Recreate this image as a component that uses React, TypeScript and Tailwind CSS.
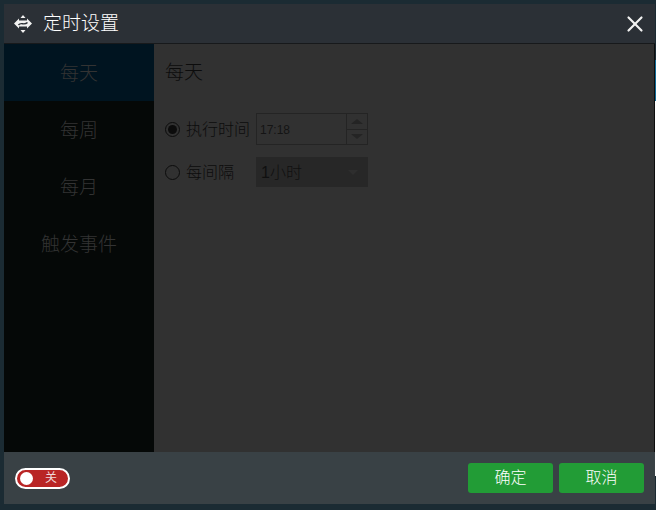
import { X } from "lucide-react";

const FONT = "font-['Liberation_Sans','Noto_Sans_CJK_SC',sans-serif]";

const TABS = ["每天", "每周", "每月", "触发事件"];

const TimerIcon = () => (
    <svg width="20" height="20" viewBox="0 0 20 20" fill="#f2f2f2">
        <path d="M10 1 L12.5 4 H7.5 Z" />
        <path d="M10 19 L7.5 16 H12.5 Z" />
        <path d="M1 9.5 L6 4.5 V6.5 H14 V4.5 L19 9.5 L14 14.5 V12.5 H6 V14.5 Z" />
        <path d="M5.5 11 C8 7.5 11 12 14.5 8.5" fill="none" stroke="#2b3036" strokeWidth="1.4" />
    </svg>
);

export default function App() {
    return (
        <div className={`${FONT} flex w-[656px] h-[510px] bg-[#1b2b33] overflow-hidden`}>
            <div className="flex flex-col flex-1 min-w-0 h-full pt-1 pb-[6px] pl-1">
                {/* Title bar */}
                <div className="flex items-center h-10 shrink-0 bg-[#2b3036] border-b border-[#17191b] pl-[9px] pr-[7px]">
                    <TimerIcon />
                    <span className="ml-[10px] text-[19px] leading-5 font-light text-white">定时设置</span>
                    <button className="ml-auto text-[#f2f2f2]">
                        <X size={26} strokeWidth={2} />
                    </button>
                </div>

                <div className="flex flex-1 min-h-0">
                    {/* Side tabs */}
                    <div className="w-[150px] shrink-0 bg-[#050807]">
                        {TABS.map((tab, i) => (
                            <div
                                key={tab}
                                className={`h-[57px] pt-[4px] flex items-center justify-center text-[19px] font-light text-[#333333] ${
                                    i === 0 ? "bg-[#001420]" : ""
                                }`}
                            >
                                {tab}
                            </div>
                        ))}
                    </div>

                    {/* Content */}
                    <div className="flex-1 bg-[#313131] border-r border-[#0e0e0e] pl-[11px] pt-[15px] text-[#0c0c0c]">
                        <div className="text-[19px] font-light leading-[28px]">每天</div>
                        <div className="mt-[26px] flex flex-col gap-3">
                            <div className="flex items-center h-8">
                                <span className="w-[15px] h-[15px] rounded-full border border-[#0c0c0c] flex items-center justify-center">
                                    <span className="w-[9px] h-[9px] rounded-full bg-[#0c0c0c]" />
                                </span>
                                <span className="ml-[6px] w-[70px] pt-[2px] text-[16px] font-light">执行时间</span>
                                <div className="flex w-[112px] h-8 border border-[#242424]">
                                    <span className="flex-1 pl-[3px] text-[12px] leading-[32px] text-[#141414]">17:18</span>
                                    <div className="w-[21px] flex flex-col border-l border-[#242424]">
                                        <span className="flex-1 flex items-center justify-center border-b border-[#242424]">
                                            <span className="border-x-[6px] border-x-transparent border-b-[5px] border-b-[#242424]" />
                                        </span>
                                        <span className="flex-1 flex items-center justify-center">
                                            <span className="border-x-[6px] border-x-transparent border-t-[5px] border-t-[#242424]" />
                                        </span>
                                    </div>
                                </div>
                            </div>
                            <div className="flex items-center h-[30px]">
                                <span className="w-[15px] h-[15px] rounded-full border border-[#0c0c0c]" />
                                <span className="ml-[6px] w-[70px] pt-[2px] text-[16px] font-light">每间隔</span>
                                <div className="flex items-center w-[112px] h-[30px] bg-[#272727] pl-[5px] pr-[10px]">
                                    <span className="flex-1 pt-[1px] text-[16px] font-light text-[#101010]">1小时</span>
                                    <span className="border-x-[5px] border-x-transparent border-t-[5px] border-t-[#2e2e2e]" />
                                </div>
                            </div>
                        </div>
                    </div>
                </div>

                {/* Footer */}
                <div className="flex items-center h-[52px] shrink-0 bg-[#394145] pl-[11px] pr-[11px]">
                    <div className="flex items-center w-[55px] h-[21px] rounded-full bg-[#b92525] border-2 border-white pl-[3px]">
                        <span className="w-[13px] h-[13px] rounded-full bg-white" />
                        <span className="ml-[12px] text-[12px] leading-none text-[#f0d8d8]">关</span>
                    </div>
                    <button className="ml-auto w-[85px] h-[30px] rounded-[3px] bg-[#229c36] text-[16px] font-light text-white">确定</button>
                    <button className="ml-[6px] w-[85px] h-[30px] rounded-[3px] bg-[#229c36] text-[16px] font-light text-white">取消</button>
                </div>
            </div>

            {/* What shows behind the dialog at its right edge */}
            <div className="w-px shrink-0 flex flex-col">
                <div className="h-[60px]" />
                <div className="h-[41px] bg-[#0f6a96]" />
                <div className="h-[375px] bg-white" />
            </div>
        </div>
    );
}
